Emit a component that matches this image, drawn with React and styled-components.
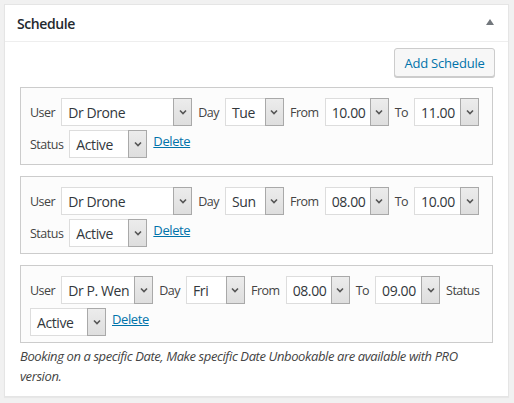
import React from "react";
import styled, { createGlobalStyle } from "styled-components";

const GlobalStyle = createGlobalStyle`
  html, body {
    margin: 0;
    padding: 0;
    background: #f1f1f1;
    font-family: "Open Sans", "Noto Sans", sans-serif;
    color: #444;
  }
`;

const schedules = [
  { user: "Dr Drone", userWidth: 131, day: "Tue", from: "10.00", to: "11.00", status: "Active", statusWidth: 78 },
  { user: "Dr Drone", userWidth: 131, day: "Sun", from: "08.00", to: "10.00", status: "Active", statusWidth: 78 },
  { user: "Dr P. Wen", userWidth: 92, day: "Fri", from: "08.00", to: "09.00", status: "Active", statusWidth: 76 },
];

function Chevron() {
  return (
    <svg width="8" height="6" viewBox="0 0 8 6">
      <path d="M1 1.5 L4 4.5 L7 1.5" fill="none" stroke="#555" strokeWidth="1.6" />
    </svg>
  );
}

function Select({ value, width }) {
  return (
    <SelectBox $width={width}>
      <SelectValue>{value}</SelectValue>
      <SelectArrow>
        <Chevron />
      </SelectArrow>
    </SelectBox>
  );
}

function ScheduleRow({ item }) {
  return (
    <Row>
      <Label>User</Label>
      <Select value={item.user} width={item.userWidth} />
      <Label>Day</Label>
      <Select value={item.day} width={59} />
      <Label>From</Label>
      <Select value={item.from} width={64} />
      <Label>To</Label>
      <Select value={item.to} width={65} />
      <Label>Status</Label>
      <Select value={item.status} width={item.statusWidth} />
      <DeleteLink href="#">Delete</DeleteLink>
    </Row>
  );
}

export default function App() {
  return (
    <>
      <GlobalStyle />
      <Page>
        <Panel>
          <Header>
            <Title>Schedule</Title>
            <Toggle />
          </Header>
          <Body>
            <Toolbar>
              <Button>Add Schedule</Button>
            </Toolbar>
            <List>
              {schedules.map((item, index) => (
                <ScheduleRow key={index} item={item} />
              ))}
            </List>
            <Note>
              Booking on a specific Date, Make specific Date Unbookable are available with PRO version.
            </Note>
          </Body>
        </Panel>
      </Page>
    </>
  );
}

const Page = styled.div`
  padding: 4px;
`;

const Panel = styled.div`
  width: 505px;
  box-sizing: border-box;
  background: #fff;
  border: 1px solid #e5e5e5;
  box-shadow: 0 1px 1px rgba(0, 0, 0, 0.04);
`;

const Header = styled.div`
  height: 36px;
  display: flex;
  align-items: center;
  justify-content: space-between;
  padding: 0 14px 0 12px;
  border-bottom: 1px solid #eee;
`;

const Title = styled.h2`
  margin: 0;
  font-size: 14px;
  font-weight: 600;
  color: #23282d;
  letter-spacing: -0.4px;
`;

const Toggle = styled.span`
  width: 0;
  height: 0;
  border-left: 4px solid transparent;
  border-right: 4px solid transparent;
  border-bottom: 6px solid #72777c;
  margin-top: -2px;
`;

const Body = styled.div`
  padding: 6px 15px 10px 15px;
`;

const Toolbar = styled.div`
  display: flex;
  justify-content: flex-end;
  margin-right: -2px;
`;

const Button = styled.button`
  height: 29px;
  width: 101px;
  padding: 0;
  background: #f7f7f7;
  border: 1px solid #ccc;
  border-radius: 3px;
  box-shadow: 0 1px 0 #ccc;
  color: #0073aa;
  font-family: inherit;
  font-size: 13px;
  letter-spacing: -0.2px;
  cursor: pointer;
`;

const List = styled.div`
  display: flex;
  flex-direction: column;
  gap: 11px;
  margin-top: 10px;
`;

const Row = styled.div`
  display: flex;
  flex-wrap: wrap;
  align-items: center;
  gap: 4px 6px;
  padding: 10px 8px 6px 9px;
  background: #fcfcfc;
  border: 1px solid #ccc;
`;

const Label = styled.span`
  font-size: 12.5px;
  letter-spacing: -0.5px;
  color: #444;
`;

const SelectBox = styled.div`
  width: ${(p) => p.$width}px;
  height: 28px;
  box-sizing: border-box;
  display: flex;
  align-items: stretch;
  background: #fff;
  border: 1px solid #ddd;
`;

const SelectValue = styled.span`
  flex: 1;
  display: flex;
  align-items: center;
  padding-left: 6px;
  font-size: 14px;
  letter-spacing: -0.4px;
  color: #32373c;
  white-space: nowrap;
  overflow: hidden;
`;

const SelectArrow = styled.span`
  width: 17px;
  margin: -1px -1px -1px 0;
  display: flex;
  align-items: center;
  justify-content: center;
  background: linear-gradient(#ececec, #dedede);
  border: 1px solid #a9a9a9;
`;

const DeleteLink = styled.a`
  font-size: 13px;
  color: #0073aa;
  text-decoration: underline;
  letter-spacing: -0.4px;
  margin-top: -6px;
`;

const Note = styled.p`
  margin: 3px 0 0;
  font-size: 13px;
  font-style: italic;
  line-height: 20px;
  color: #444;
  letter-spacing: -0.4px;
`;
